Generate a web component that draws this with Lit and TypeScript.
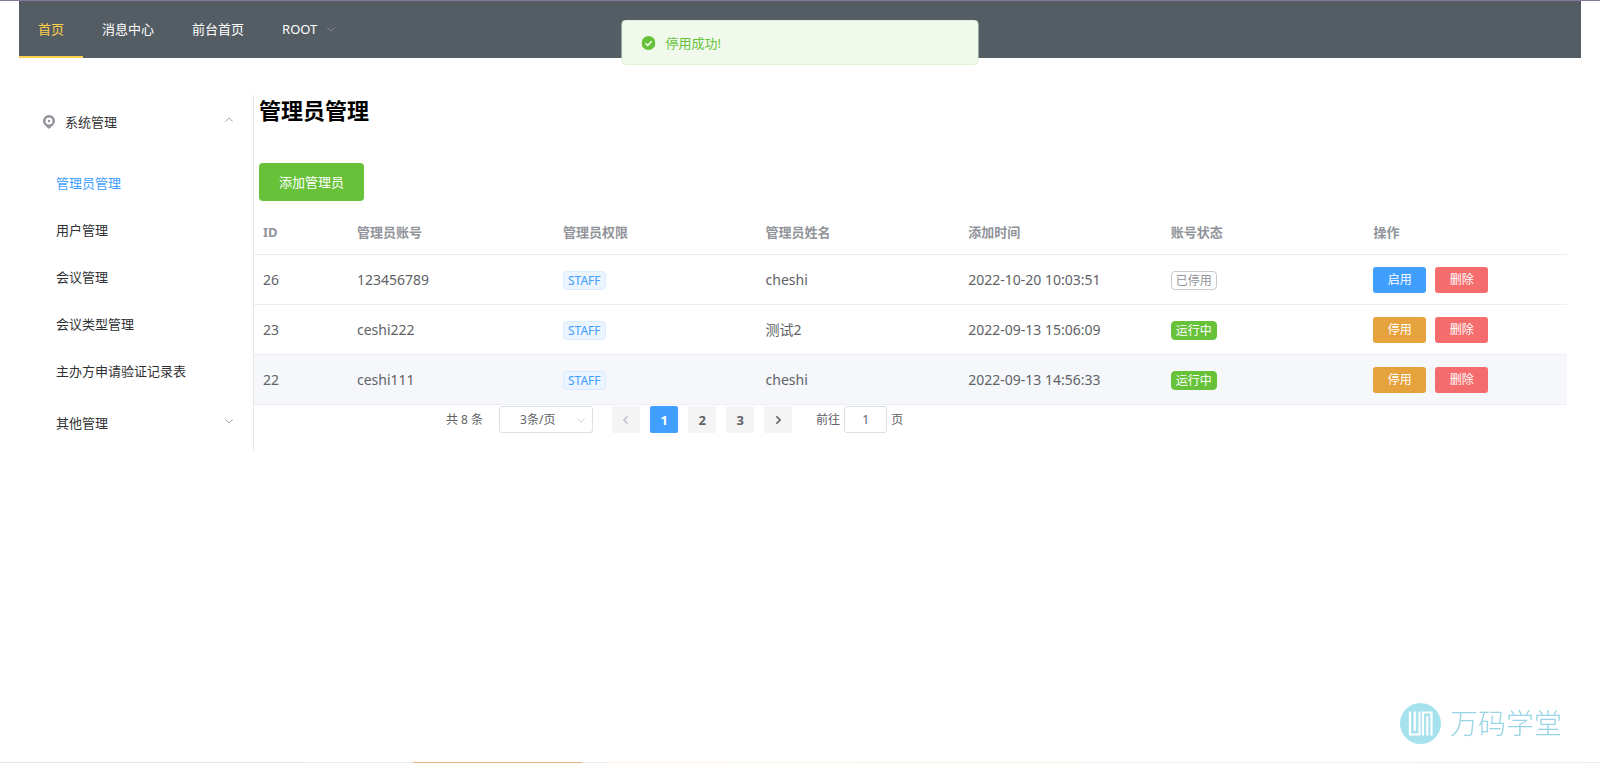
import { LitElement, html, css, svg } from "lit";
import { customElement, property, state } from "lit/decorators.js";
import { classMap } from "lit/directives/class-map.js";

interface Admin {
  id: number;
  account: string;
  role: string;
  name: string;
  created: string;
  active: boolean;
}

const ADMINS: Admin[] = [
  { id: 26, account: "123456789", role: "STAFF", name: "cheshi", created: "2022-10-20 10:03:51", active: false },
  { id: 23, account: "ceshi222", role: "STAFF", name: "测试2", created: "2022-09-13 15:06:09", active: true },
  { id: 22, account: "ceshi111", role: "STAFF", name: "cheshi", created: "2022-09-13 14:56:33", active: true },
];

const CHEVRONS: Record<string, string> = {
  down: "M1.5 4 L6 8.5 L10.5 4",
  up: "M1.5 8 L6 3.5 L10.5 8",
  left: "M8 1.5 L3.5 6 L8 10.5",
  right: "M4 1.5 L8.5 6 L4 10.5",
};

const chevron = (dir: string) => html`<svg class="chevron" viewBox="0 0 12 12" aria-hidden="true">
  ${svg`<path d=${CHEVRONS[dir]} fill="none" stroke="currentColor" />`}
</svg>`;

const base = css`
  * {
    box-sizing: border-box;
  }
  a {
    color: inherit;
    text-decoration: none;
  }
  button,
  input,
  select {
    font: inherit;
    margin: 0;
  }
  button {
    border: 0;
    cursor: pointer;
    white-space: nowrap;
  }
  .chevron {
    display: block;
    width: 10px;
    height: 10px;
    flex: none;
  }
`;

@customElement("top-nav")
class TopNav extends LitElement {
  static styles = [
    base,
    css`
      :host {
        display: block;
      }
      .bar {
        display: flex;
        height: 57px;
        background: #545c64;
        color: #fff;
      }
      .item {
        display: flex;
        align-items: center;
        gap: 9px;
        padding: 0 19px;
        background: none;
        color: inherit;
        border-bottom: 2px solid transparent;
      }
      .active {
        color: #ffd04b;
        border-bottom-color: #ffd04b;
      }
      .item .chevron {
        color: #909399;
      }
    `,
  ];
  render() {
    return html`<nav class="bar">
      <a class="item active" href="#home">首页</a>
      <a class="item" href="#messages">消息中心</a>
      <a class="item" href="#front">前台首页</a>
      <button class="item" type="button">ROOT ${chevron("down")}</button>
    </nav>`;
  }
}

@customElement("side-menu")
class SideMenu extends LitElement {
  @state() current = "管理员管理";

  static styles = [
    base,
    css`
      :host {
        display: block;
        border-right: 1px solid #e6e6e6;
        color: #303133;
      }
      .title {
        display: flex;
        align-items: center;
        width: 100%;
        height: 54px;
        padding: 0 19px 0 37px;
        background: none;
        color: inherit;
        text-align: left;
      }
      .first {
        padding-left: 22px;
      }
      .label {
        flex: 1;
      }
      .pin {
        width: 16px;
        height: 16px;
        margin-right: 8px;
        color: #909399;
      }
      .title .chevron {
        margin-bottom: 4px;
        color: #909399;
      }
      .list {
        list-style: none;
        margin: 0;
        padding: 10px 0 2px;
      }
      .link {
        display: flex;
        align-items: center;
        height: 47px;
        padding-left: 37px;
      }
      .on {
        color: #409eff;
      }
    `,
  ];
  render() {
    const items = ["管理员管理", "用户管理", "会议管理", "会议类型管理", "主办方申请验证记录表"];
    return html`<nav>
      <button class="title first" type="button" aria-expanded="true">
        <svg class="pin" viewBox="0 0 16 16" aria-hidden="true">
          <path
            fill="currentColor"
            fill-rule="evenodd"
            d="M8 1a6 6 0 0 1 6 6c0 3.200-3.400 5.600-6 8-2.600-2.400-6-4.800-6-8a6 6 0 0 1 6-6zm0 2.500a3.500 3.500 0 1 0 0 7 3.500 3.500 0 0 0 0-7z"
          />
          <circle cx="8" cy="7" r="1.200" fill="currentColor" />
        </svg>
        <span class="label">系统管理</span>${chevron("up")}
      </button>
      <ul class="list">
        ${items.map(
          (t) => html`<li>
            <a class=${classMap({ link: true, on: t === this.current })} href="#" @click=${() => (this.current = t)}
              >${t}</a
            >
          </li>`
        )}
      </ul>
      <button class="title" type="button" aria-expanded="false">
        <span class="label">其他管理</span>${chevron("down")}
      </button>
    </nav>`;
  }
}

@customElement("admin-table")
class AdminTable extends LitElement {
  @property({ attribute: false }) rows: Admin[] = [];

  static styles = [
    base,
    css`
      :host {
        display: block;
      }
      .table {
        width: 100%;
        table-layout: fixed;
        border-collapse: separate;
        border-spacing: 0;
        color: #606266;
      }
      .id {
        width: 94px;
      }
      .account {
        width: 206px;
      }
      th,
      td {
        padding: 0 9px;
        text-align: left;
        border-bottom: 1px solid #ebeef5;
      }
      th {
        height: 45px;
        color: #909399;
        font-weight: 700;
      }
      td {
        height: 50px;
        font-size: 14px;
      }
      .current td {
        background: #f5f7fa;
      }
      .tag {
        display: inline-block;
        height: 19px;
        padding: 0 4px;
        border: 1px solid;
        border-radius: 4px;
        font-size: 12px;
        line-height: 17px;
        vertical-align: middle;
      }
      .staff {
        background: #ecf5ff;
        border-color: #d9ecff;
        color: #409eff;
      }
      .stopped {
        background: #fff;
        border-color: #c8c9cc;
        color: #909399;
      }
      .running {
        background: #67c23a;
        border-color: #67c23a;
        color: #fff;
      }
      .actions {
        display: flex;
        gap: 9px;
      }
      .btn {
        width: 53px;
        height: 26px;
        padding: 0;
        border-radius: 3px;
        color: #fff;
        font-size: 12px;
      }
      .start {
        background: #409eff;
      }
      .stop {
        background: #e6a23c;
      }
      .delete {
        background: #f56c6c;
      }
    `,
  ];
  render() {
    return html`<table class="table">
      <thead>
        <tr>
          <th class="id">ID</th>
          <th class="account">管理员账号</th>
          <th>管理员权限</th>
          <th>管理员姓名</th>
          <th>添加时间</th>
          <th>账号状态</th>
          <th>操作</th>
        </tr>
      </thead>
      <tbody>
        ${this.rows.map(
          (r) => html`<tr class=${classMap({ current: r.id === 22 })}>
            <td>${r.id}</td>
            <td>${r.account}</td>
            <td><span class="tag staff">${r.role}</span></td>
            <td>${r.name}</td>
            <td>${r.created}</td>
            <td>
              <span class=${classMap({ tag: true, running: r.active, stopped: !r.active })}
                >${r.active ? "运行中" : "已停用"}</span
              >
            </td>
            <td>
              <div class="actions">
                <button type="button" class=${classMap({ btn: true, stop: r.active, start: !r.active })}>
                  ${r.active ? "停用" : "启用"}
                </button>
                <button type="button" class="btn delete">删除</button>
              </div>
            </td>
          </tr>`
        )}
      </tbody>
    </table>`;
  }
}

@customElement("page-bar")
class PageBar extends LitElement {
  @state() page = 1;

  static styles = [
    base,
    css`
      :host {
        display: block;
        color: #606266;
        font-size: 12px;
      }
      .bar {
        display: flex;
        align-items: center;
        height: 27px;
      }
      .size {
        display: grid;
        align-items: center;
        width: 94px;
        margin: 0 19px 0 16px;
      }
      .select {
        grid-area: 1 / 1;
        appearance: none;
        width: 100%;
        height: 27px;
        padding: 0 20px;
        border: 1px solid #dcdfe6;
        border-radius: 3px;
        background: #fff;
        color: inherit;
      }
      .size .chevron {
        grid-area: 1 / 1;
        justify-self: end;
        margin-right: 7px;
        color: #c0c4cc;
        pointer-events: none;
      }
      .pages {
        display: flex;
        gap: 10px;
        margin-right: 24px;
      }
      .page {
        display: grid;
        place-items: center;
        width: 28px;
        height: 27px;
        padding: 0;
        border-radius: 2px;
        background: #f4f4f5;
        color: #606266;
        font-size: 13px;
        font-weight: 700;
      }
      .page .chevron {
        stroke-width: 2px;
      }
      .page:disabled {
        color: #c0c4cc;
      }
      .on {
        background: #409eff;
        color: #fff;
      }
      .jump {
        display: flex;
        align-items: center;
        gap: 4px;
      }
      .input {
        width: 43px;
        height: 27px;
        padding: 0 3px;
        border: 1px solid #dcdfe6;
        border-radius: 3px;
        background: #fff;
        color: inherit;
        text-align: center;
      }
    `,
  ];
  render() {
    return html`<div class="bar">
      <span>共 8 条</span>
      <div class="size">
        <select class="select" aria-label="每页条数">
          <option>3条/页</option>
        </select>
        ${chevron("down")}
      </div>
      <div class="pages">
        <button class="page" type="button" aria-label="上一页" ?disabled=${this.page === 1}>${chevron("left")}</button>
        ${[1, 2, 3].map(
          (n) => html`<button
            type="button"
            class=${classMap({ page: true, on: n === this.page })}
            @click=${() => (this.page = n)}
          >
            ${n}
          </button>`
        )}
        <button class="page" type="button" aria-label="下一页">${chevron("right")}</button>
      </div>
      <label class="jump">前往<input class="input" type="text" .value=${String(this.page)} />页</label>
    </div>`;
  }
}

@customElement("app-root")
class AppRoot extends LitElement {
  static styles = [
    base,
    css`
      :host {
        display: block;
        min-height: 100vh;
        padding: 0 19px;
        border-top: 1px solid #84789e;
        background: #fff;
        font-family: "Noto Sans", "Noto Sans CJK SC", sans-serif;
        font-size: 13px;
        line-height: 20px;
        box-sizing: border-box;
      }
      .body {
        display: grid;
        grid-template-columns: 235px minmax(0, 1fr);
        align-items: start;
        padding: 37px 14px 0 0;
      }
      .heading {
        margin: 0 5px 38px;
        color: #000;
        font-size: 22px;
        line-height: 30px;
        font-weight: 700;
      }
      .add {
        display: block;
        height: 38px;
        margin: 0 5px 9px;
        padding: 0 20px;
        border-radius: 4px;
        background: #67c23a;
        color: #fff;
      }
      .pager {
        margin: 1px 0 0 192px;
      }
      .message {
        position: fixed;
        top: 20px;
        left: 50%;
        transform: translateX(-50%);
        display: flex;
        align-items: center;
        gap: 10px;
        width: 357px;
        height: 45px;
        padding: 0 19px;
        border: 1px solid #e1f3d8;
        border-radius: 4px;
        background: #f0f9eb;
        color: #67c23a;
      }
      .ok {
        width: 14px;
        height: 14px;
      }
      .brand {
        position: fixed;
        right: 38px;
        bottom: 19px;
        display: flex;
        align-items: center;
        gap: 9px;
        color: #9bd5e5;
        font-size: 28px;
        line-height: 42px;
        font-weight: 300;
      }
      .logo {
        width: 41px;
        height: 41px;
      }
      .progress {
        position: fixed;
        left: 0;
        right: 0;
        bottom: 0;
        height: 1px;
        background: linear-gradient(90deg, #dce8ec 0 19%, #eeeeec 19% 38%, #fdf0e2 38%, #f5ece4 100%);
      }
      .fill {
        width: 169px;
        height: 1px;
        margin-left: 413px;
        background: #e9b27c;
      }
    `,
  ];
  render() {
    return html`
      <top-nav></top-nav>
      <div class="body">
        <side-menu></side-menu>
        <main>
          <h1 class="heading">管理员管理</h1>
          <button class="add" type="button">添加管理员</button>
          <admin-table .rows=${ADMINS}></admin-table>
          <page-bar class="pager"></page-bar>
        </main>
      </div>
      <div class="message" role="status">
        <svg class="ok" viewBox="0 0 14 14" aria-hidden="true">
          <circle cx="7" cy="7" r="7" fill="currentColor" />
          <path d="M4 7.200 L6.200 9.400 L10.200 5.200" fill="none" stroke="#fff" stroke-width="1.400" />
        </svg>
        <span>停用成功!</span>
      </div>
      <div class="brand">
        <svg class="logo" viewBox="0 0 41 41" aria-hidden="true">
          <circle cx="20.500" cy="20.500" r="20.500" fill="#a5e2ee" />
          <path
            d="M10 8.500 V31.500 H19.500 V8.500 M14.800 8.500 V28 M23 32.500 V9.500 H31.500 V32.500 M27.300 13 V32.500"
            fill="none"
            stroke="#fff"
            stroke-width="2.200"
          />
        </svg>
        <span>万码学堂</span>
      </div>
      <div class="progress"><div class="fill"></div></div>
    `;
  }
}
